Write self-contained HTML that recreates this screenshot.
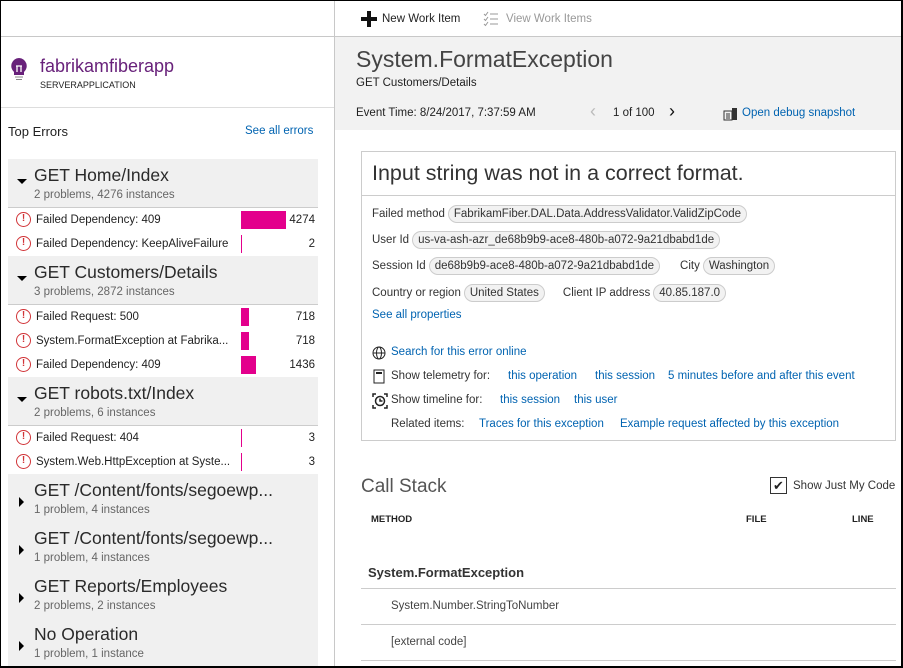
<!DOCTYPE html>
<html><head><meta charset="utf-8"><style>
*{box-sizing:border-box;margin:0;padding:0}
body{width:903px;height:668px;overflow:hidden;font-family:"Liberation Sans",sans-serif;color:#222;background:#fff;position:relative}
.a{position:absolute;white-space:nowrap}
.frame{position:absolute;left:0;top:0;width:903px;height:668px;border:1px solid #000;border-right:2px solid #000;border-bottom:2px solid #000;pointer-events:none}
.lnk{color:#0063b1}
.gh{position:absolute;left:8px;width:310px;height:48px;background:#f0f0f0}
.gh .t{position:absolute;left:26px;top:6px;font-size:17.5px;color:#2a2a2a}
.gh .s{position:absolute;left:26px;top:30px;font-size:11.5px;color:#666}
.gh .ar{position:absolute;left:9px;top:20px;width:0;height:0}
.down{border-left:5px solid transparent;border-right:5px solid transparent;border-top:5px solid #000}
.right{border-top:5px solid transparent;border-bottom:5px solid transparent;border-left:5px solid #000;left:11px!important;top:23px!important}
.row{position:absolute;left:8px;width:310px;height:24px;font-size:11.5px}
.row .ic{position:absolute;left:8px;top:4px;width:15px;height:15px;border:1.5px solid #d13438;border-radius:50%;color:#d13438;font-size:10px;font-weight:bold;text-align:center;line-height:12px}
.row .tx{position:absolute;left:28px;top:6px}
.row .bar{position:absolute;left:233px;top:3px;height:18px;background:#e3008c}
.row .n{position:absolute;right:3px;top:6px}
.pill{display:inline-block;border:1px solid #ccc;background:#f2f2f2;border-radius:11px;padding:2px 5px;font-size:11.5px;margin-left:3px}
.pr{position:absolute;left:372px;font-size:11.5px;color:#333}
</style></head><body>
<div class="a" style="left:334px;top:0;width:1px;height:668px;background:#c8c8c8"></div>
<div class="a" style="left:0;top:36px;width:334px;height:1px;background:#c8c8c8"></div>
<div class="a" style="left:0;top:107px;width:334px;height:1px;background:#ddd"></div>
<div class="a" style="left:335px;top:36px;width:568px;height:1px;background:#c8c8c8"></div>
<div class="a" style="left:361px;top:17px;width:16px;height:4px;background:#111"></div>
<div class="a" style="left:367px;top:11px;width:4px;height:16px;background:#111"></div>
<div class="a" style="left:382px;top:13px;font-size:11.5px;color:#222">New Work Item</div>
<svg class="a" style="left:483px;top:11px" width="16" height="16" viewBox="0 0 16 16" fill="none" stroke="#999" stroke-width="1"><path d="M1 3l1.5 1.5L5 1M1 8l1.5 1.5L5 6M1 13l1.5 1.5L5 11M7 3h8M7 8h8M7 13h8"/></svg>
<div class="a" style="left:506px;top:13px;font-size:11.5px;color:#999">View Work Items</div>
<div class="a" style="left:335px;top:37px;width:566px;height:93px;background:#f2f2f2"></div>
<div class="a" style="left:356px;top:46px;font-size:23px;color:#444">System.FormatException</div>
<div class="a" style="left:356px;top:77px;font-size:11.5px">GET Customers/Details</div>
<div class="a" style="left:356px;top:107px;font-size:11.5px">Event Time: 8/24/2017, 7:37:59 AM</div>
<div class="a" style="left:590px;top:101px;font-size:18px;color:#bbb">&lsaquo;</div>
<div class="a" style="left:613px;top:107px;font-size:11.5px">1 of 100</div>
<div class="a" style="left:669px;top:101px;font-size:18px;color:#111">&rsaquo;</div>
<svg class="a" style="left:723px;top:107px" width="15" height="14" viewBox="0 0 15 14"><rect x="1" y="4" width="8" height="9" fill="none" stroke="#333"/><path d="M3 7h4M3 9h4M3 11h4" stroke="#333"/><rect x="9" y="1" width="5" height="12" fill="#333"/></svg>
<div class="a lnk" style="left:742px;top:107px;font-size:11.5px">Open debug snapshot</div>
<svg class="a" style="left:10px;top:57px" width="18" height="24" viewBox="0 0 18 24"><path d="M9 1a8 8 0 0 0-5 14v3h10v-3A8 8 0 0 0 9 1z" fill="#68217a"/><path d="M6 9h6M7 9v6M11 9v6" stroke="#fff" stroke-width="1.3" fill="none"/><path d="M5 20h8M6 22.5h6" stroke="#888" stroke-width="1"/></svg>
<div class="a" style="left:40px;top:56px;font-size:18px;color:#68217a">fabrikamfiberapp</div>
<div class="a" style="left:40px;top:80px;font-size:9px;color:#222">SERVERAPPLICATION</div>
<div class="a" style="left:8px;top:124px;font-size:13px;color:#222">Top Errors</div>
<div class="a lnk" style="left:245px;top:125px;font-size:11.5px">See all errors</div>

<div class="gh" style="top:159px"><div class="ar down"></div><div class="t">GET Home/Index</div><div class="s">2 problems, 4276 instances</div></div>
<div class="a" style="left:8px;top:207px;width:310px;height:1px;background:#ccc"></div>
<div class="row" style="top:208px"><div class="ic">!</div><div class="tx">Failed Dependency: 409</div><div class="bar" style="width:45px"></div><div class="n">4274</div></div>
<div class="row" style="top:232px"><div class="ic">!</div><div class="tx">Failed Dependency: KeepAliveFailure</div><div class="bar" style="width:1px"></div><div class="n">2</div></div>

<div class="gh" style="top:256px"><div class="ar down"></div><div class="t">GET Customers/Details</div><div class="s">3 problems, 2872 instances</div></div>
<div class="a" style="left:8px;top:304px;width:310px;height:1px;background:#ccc"></div>
<div class="row" style="top:305px"><div class="ic">!</div><div class="tx">Failed Request: 500</div><div class="bar" style="width:8px"></div><div class="n">718</div></div>
<div class="row" style="top:329px"><div class="ic">!</div><div class="tx">System.FormatException at Fabrika...</div><div class="bar" style="width:8px"></div><div class="n">718</div></div>
<div class="row" style="top:353px"><div class="ic">!</div><div class="tx">Failed Dependency: 409</div><div class="bar" style="width:15px"></div><div class="n">1436</div></div>

<div class="gh" style="top:377px"><div class="ar down"></div><div class="t">GET robots.txt/Index</div><div class="s">2 problems, 6 instances</div></div>
<div class="a" style="left:8px;top:425px;width:310px;height:1px;background:#ccc"></div>
<div class="row" style="top:426px"><div class="ic">!</div><div class="tx">Failed Request: 404</div><div class="bar" style="width:1px"></div><div class="n">3</div></div>
<div class="row" style="top:450px"><div class="ic">!</div><div class="tx">System.Web.HttpException at Syste...</div><div class="bar" style="width:1px"></div><div class="n">3</div></div>

<div class="gh" style="top:474px"><div class="ar right"></div><div class="t">GET /Content/fonts/segoewp...</div><div class="s">1 problem, 4 instances</div></div>
<div class="gh" style="top:522px"><div class="ar right"></div><div class="t">GET /Content/fonts/segoewp...</div><div class="s">1 problem, 4 instances</div></div>
<div class="gh" style="top:570px"><div class="ar right"></div><div class="t">GET Reports/Employees</div><div class="s">2 problems, 2 instances</div></div>
<div class="gh" style="top:618px;height:50px"><div class="ar right"></div><div class="t">No Operation</div><div class="s">1 problem, 1 instance</div></div>

<div class="a" style="left:361px;top:151px;width:535px;height:290px;border:1px solid #ccc"></div>
<div class="a" style="left:362px;top:195px;width:533px;height:1px;background:#ccc"></div>
<div class="a" style="left:372px;top:161px;font-size:21.5px;color:#333">Input string was not in a correct format.</div>
<div class="pr" style="top:205px">Failed method<span class="pill">FabrikamFiber.DAL.Data.AddressValidator.ValidZipCode</span></div>
<div class="pr" style="top:231px">User Id<span class="pill">us-va-ash-azr_de68b9b9-ace8-480b-a072-9a21dbabd1de</span></div>
<div class="pr" style="top:257px">Session Id<span class="pill">de68b9b9-ace8-480b-a072-9a21dbabd1de</span><span style="margin-left:20px">City</span><span class="pill">Washington</span></div>
<div class="pr" style="top:284px">Country or region<span class="pill">United States</span><span style="margin-left:18px">Client IP address</span><span class="pill">40.85.187.0</span></div>
<div class="a lnk" style="left:372px;top:309px;font-size:11.5px">See all properties</div>
<svg class="a" style="left:372px;top:346px" width="14" height="14" viewBox="0 0 14 14" fill="none" stroke="#222"><circle cx="7" cy="7" r="6"/><ellipse cx="7" cy="7" rx="2.5" ry="6"/><path d="M1 7h12"/></svg>
<div class="a lnk" style="left:391px;top:346px;font-size:11.5px">Search for this error online</div>
<svg class="a" style="left:373px;top:369px" width="12" height="15" viewBox="0 0 12 15" fill="none" stroke="#222"><rect x="1" y="1" width="10" height="13"/><path d="M3 4h6" stroke-width="2"/></svg>
<div class="a" style="left:391px;top:370px;font-size:11.5px;color:#333">Show telemetry for:</div>
<div class="a lnk" style="left:508px;top:370px;font-size:11.5px">this operation</div>
<div class="a lnk" style="left:595px;top:370px;font-size:11.5px">this session</div>
<div class="a lnk" style="left:668px;top:370px;font-size:11.5px">5 minutes before and after this event</div>
<svg class="a" style="left:372px;top:393px" width="16" height="16" viewBox="0 0 16 16" fill="none" stroke="#222" stroke-width="1.5"><circle cx="8" cy="8" r="4.5"/><path d="M8 5.5V8h2.5M1 4V1h3M12 1h3v3M1 12v3h3M15 12v3h-3"/></svg>
<div class="a" style="left:391px;top:394px;font-size:11.5px;color:#333">Show timeline for:</div>
<div class="a lnk" style="left:500px;top:394px;font-size:11.5px">this session</div>
<div class="a lnk" style="left:574px;top:394px;font-size:11.5px">this user</div>
<div class="a" style="left:391px;top:418px;font-size:11.5px;color:#333">Related items:</div>
<div class="a lnk" style="left:479px;top:418px;font-size:11.5px">Traces for this exception</div>
<div class="a lnk" style="left:620px;top:418px;font-size:11.5px">Example request affected by this exception</div>
<div class="a" style="left:361px;top:476px;font-size:19px;color:#555">Call Stack</div>
<div class="a" style="left:770px;top:477px;width:17px;height:17px;border:1px solid #333;font-size:13px;line-height:15px;text-align:center">&#10004;</div>
<div class="a" style="left:793px;top:480px;font-size:11.5px;color:#333">Show Just My Code</div>
<div class="a" style="left:371px;top:514px;font-size:9.5px;font-weight:bold">METHOD</div>
<div class="a" style="left:746px;top:514px;font-size:9.5px;font-weight:bold">FILE</div>
<div class="a" style="left:852px;top:514px;font-size:9.5px;font-weight:bold">LINE</div>
<div class="a" style="left:368px;top:565px;font-size:13px;font-weight:bold;color:#333">System.FormatException</div>
<div class="a" style="left:361px;top:588px;width:535px;height:1px;background:#ccc"></div>
<div class="a" style="left:391px;top:600px;font-size:11.5px;color:#444">System.Number.StringToNumber</div>
<div class="a" style="left:361px;top:624px;width:535px;height:1px;background:#ccc"></div>
<div class="a" style="left:391px;top:636px;font-size:11.5px;color:#444">[external code]</div>
<div class="a" style="left:361px;top:660px;width:535px;height:1px;background:#ccc"></div>
<div class="frame"></div>
</body></html>
